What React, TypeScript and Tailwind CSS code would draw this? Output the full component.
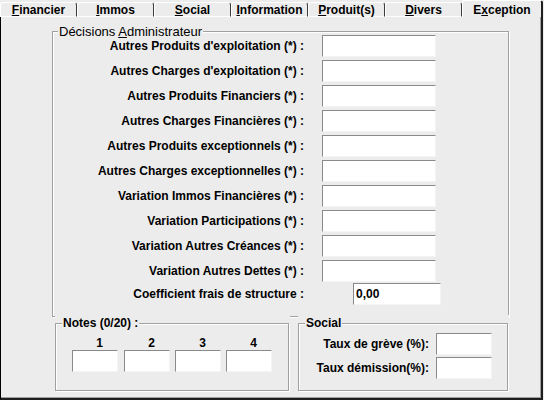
import React from "react";

const TABS = [
  { u: "F", rest: "inancier" },
  { u: "I", rest: "mmos" },
  { u: "S", rest: "ocial" },
  { u: "I", rest: "nformation" },
  { u: "P", rest: "roduit(s)" },
  { u: "D", rest: "ivers" },
];

const ROWS = [
  "Autres Produits d'exploitation (*) :",
  "Autres Charges d'exploitation (*) :",
  "Autres Produits Financiers (*) :",
  "Autres Charges Financières (*) :",
  "Autres Produits exceptionnels (*) :",
  "Autres Charges exceptionnelles (*) :",
  "Variation Immos Financières (*) :",
  "Variation Participations (*) :",
  "Variation Autres Créances (*) :",
  "Variation Autres Dettes (*) :",
];

// sunken win32 edit box
function Field({ className = "", value = "" }: { className?: string; value?: string }) {
  return (
    <div
      className={
        "h-[22px] bg-white border-t border-l border-[#8a8a8a] border-r border-b border-r-[#f4f4f4] border-b-[#f4f4f4] pl-[2px] text-[12px] font-bold leading-[20px] " +
        className
      }
    >
      {value}
    </div>
  );
}

function Tab({ u, rest }: { u: string; rest: string }) {
  return (
    <div className="w-[77px] h-[15px] mt-[2px] border-t border-l border-b border-white border-r border-r-[#3c3c3c] rounded-t-[3px] flex items-center justify-center font-bold text-[12px] leading-[12px]">
      <span>
        <span className="underline underline-offset-[1px]">{u}</span>
        {rest}
      </span>
    </div>
  );
}

export default function App() {
  return (
    <div className="w-[544px] h-[400px] bg-[#ececec] text-black font-['Liberation_Sans',Arial,sans-serif] flex flex-col select-none">
      {/* tab strip */}
      <div className="flex h-[17px] shrink-0">
        {TABS.map((t, i) => (
          <Tab key={i} u={t.u} rest={t.rest} />
        ))}
        <div className="w-[81px] h-[17px] border-t border-l border-white border-r-2 border-r-[#1e1e1e] rounded-t-[3px] flex items-center justify-center font-bold text-[12px] leading-[12px] pt-px">
          <span>
            E<span className="underline underline-offset-[1px]">x</span>ception
          </span>
        </div>
      </div>

      {/* page */}
      <div className="w-[543px] flex-1 border-l border-l-black border-r-2 border-r-[#1e1e1e] border-b-2 border-b-[#1e1e1e] shadow-[inset_-1px_-1px_0_#a0a0a0] flex flex-col">
        {/* Décisions Administrateur */}
        <div className="ml-[51px] mt-[14px] w-[457px] h-[286px] shrink-0 border border-[#a0a0a0] shadow-[inset_1px_1px_0_#fff,1px_1px_0_#fff] flex flex-col">
          <div className="self-start ml-[5px] px-[1px] -mt-[8px] -mb-[4px] h-[15px] leading-[15px] text-[13px] bg-[#ececec]">
            Décisions <span className="underline underline-offset-[1px]">A</span>dministrateur
          </div>
          {ROWS.map((r) => (
            <div key={r} className="flex items-center h-[22px] mb-[3px]">
              <div className="w-[251px] text-right font-bold text-[12px] leading-[14px] whitespace-nowrap">{r}</div>
              <Field className="ml-[18px] w-[114px]" />
            </div>
          ))}
          <div className="flex items-center h-[22px] -mt-[2px]">
            <div className="w-[251px] text-right font-bold text-[12px] leading-[14px] whitespace-nowrap">
              Coefficient frais de structure :
            </div>
            <Field className="ml-[49px] w-[88px]" value="0,00" />
          </div>
        </div>

        {/* bottom groups */}
        <div className="flex -mt-[2px]">
          {/* Notes */}
          <div className="ml-[54px] w-[235px] h-[77px] bg-[#ececec] pt-[8px]">
            <div className="w-[234px] h-[68px] border border-[#a0a0a0] shadow-[inset_1px_1px_0_#fff,1px_1px_0_#fff] flex flex-col">
              <div className="self-start ml-[6px] px-[1px] -mt-[8px] h-[14px] leading-[14px] text-[12px] font-bold bg-[#ececec]">
                Notes (0/20) :
              </div>
              <div className="flex mt-[6px] h-[14px] pl-[16px] text-[12px] font-bold leading-[14px]">
                <div className="w-[46px] text-right pr-[15px]">1</div>
                <div className="w-[46px] ml-[6px] text-right pr-[15px]">2</div>
                <div className="w-[46px] ml-[5px] text-right pr-[15px]">3</div>
                <div className="w-[46px] ml-[5px] text-right pr-[15px]">4</div>
              </div>
              <div className="flex pl-[16px]">
                <Field className="w-[46px]" />
                <Field className="w-[46px] ml-[6px]" />
                <Field className="w-[46px] ml-[5px]" />
                <Field className="w-[46px] ml-[5px]" />
              </div>
            </div>
          </div>

          {/* Social */}
          <div className="ml-[8px] w-[211px] h-[77px] bg-[#ececec] pt-[8px]">
            <div className="w-[210px] h-[68px] border border-[#a0a0a0] shadow-[inset_1px_1px_0_#fff,1px_1px_0_#fff] flex flex-col">
              <div className="self-start ml-[6px] px-[1px] -mt-[8px] h-[14px] leading-[14px] text-[12px] font-bold bg-[#ececec]">
                Social
              </div>
              <div className="flex flex-col gap-[2px] mt-[3px] pr-[15px]">
                <div className="flex items-center justify-end h-[22px]">
                  <span className="font-bold text-[12px] leading-[14px]">Taux de grève (%):</span>
                  <Field className="ml-[7px] w-[56px]" />
                </div>
                <div className="flex items-center justify-end h-[22px]">
                  <span className="font-bold text-[12px] leading-[14px]">Taux démission(%):</span>
                  <Field className="ml-[7px] w-[56px]" />
                </div>
              </div>
            </div>
          </div>
        </div>
      </div>
    </div>
  );
}
